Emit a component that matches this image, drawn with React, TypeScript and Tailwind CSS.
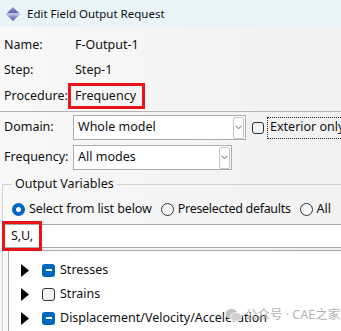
import React from "react";

const Chevron = () => (
  <svg width="7" height="5" viewBox="0 0 7 5" className="block">
    <path d="M0.5 0.8 L3.5 3.8 L6.5 0.8" fill="none" stroke="#555" strokeWidth="0.9" />
  </svg>
);

const Combo = ({ text, width }: { text: string; width: string }) => (
  <div className={`${width} flex-none h-[25px] flex items-center bg-white border border-[#adadad] pl-[4px] pr-[1px]`}>
    <span className="flex-1">{text}</span>
    <div className="w-[11px] h-[22px] border border-[#c4c4c4] rounded-[2px] flex items-center justify-center">
      <Chevron />
    </div>
  </div>
);

const Triangle = () => (
  <svg width="8" height="13" viewBox="0 0 8 13" className="block flex-none">
    <path d="M0 0 L8 6.5 L0 13 Z" fill="#000" />
  </svg>
);

const Check = ({ partial }: { partial?: boolean }) =>
  partial ? (
    <div className="flex-none w-[13px] h-[13px] rounded-[3px] bg-[#0067c0] flex items-center justify-center">
      <div className="w-[6px] h-[1.5px] bg-white" />
    </div>
  ) : (
    <div className="flex-none w-[13px] h-[13px] rounded-[3px] bg-[#f3f3f3] border border-[#333]" />
  );

const Radio = ({ on }: { on?: boolean }) =>
  on ? (
    <div className="flex-none w-[13px] h-[13px] rounded-full bg-[#0067c0] flex items-center justify-center">
      <div className="w-[5px] h-[5px] rounded-full bg-white" />
    </div>
  ) : (
    <div className="flex-none w-[13px] h-[13px] rounded-full border border-[#333] bg-[#f6f6f6]" />
  );

const items = [
  { label: "Stresses", partial: true },
  { label: "Strains", partial: false },
  { label: "Displacement/Velocity/Acceleration", partial: true },
];

export default function App() {
  return (
    <div className="w-[341px] h-[331px] overflow-hidden relative bg-gradient-to-r from-[#f8f8f8] to-[#f1f1f1] text-[12.5px] leading-none text-[#111] font-['Noto_Sans','Noto_Sans_CJK_SC',sans-serif]">
      <div className="h-[27px] bg-[#e8f4f8] flex items-center pl-[6px] gap-[7px] text-[11.5px]">
        <svg width="14" height="16" viewBox="0 0 14 16" className="block">
          <defs>
            <linearGradient id="g" x1="0" y1="0" x2="0" y2="1">
              <stop offset="0" stopColor="#9a9ed8" />
              <stop offset="1" stopColor="#5a5fa8" />
            </linearGradient>
          </defs>
          <path d="M7 1 L13 7 L1 7 Z" fill="url(#g)" />
          <rect x="0" y="7.6" width="14" height="1" fill="#8a8ec8" />
          <path d="M1 9.2 L13 9.2 L7 15 Z" fill="url(#g)" />
        </svg>
        <span>Edit Field Output Request</span>
      </div>

      <div className="pl-[4px] pt-[6px]">
        <div className="h-[25px] flex items-center">
          <span className="w-[64px] flex-none whitespace-nowrap">Name:</span>
          <span className="pl-[7px]">F-Output-1</span>
        </div>
        <div className="h-[25px] flex items-center">
          <span className="w-[64px] flex-none whitespace-nowrap">Step:</span>
          <span className="pl-[7px]">Step-1</span>
        </div>
        <div className="h-[26px] flex items-center">
          <span className="w-[64px] flex-none whitespace-nowrap">Procedure:</span>
          <span className="h-[26px] flex items-center border-[3px] border-[#e8141b] pl-[4px] pr-[6px]">Frequency</span>
        </div>
      </div>

      <div className="mt-[2px] border-t border-[#b4b4b4]" />

      <div className="pl-[4px] pt-[3px] flex flex-col gap-[5px]">
        <div className="flex items-center">
          <span className="w-[69px] flex-none">Domain:</span>
          <Combo text="Whole model" width="w-[173px]" />
          <div className="flex-none ml-[6px] w-[12px] h-[12px] rounded-[3px] border border-[#333] bg-[#f4f4f4]" />
          <span className="flex-none ml-[3px] h-[22px] flex items-center pl-[2px] pr-[4px] border border-dotted border-[#222] whitespace-nowrap">
            Exterior only
          </span>
        </div>
        <div className="flex items-center">
          <span className="w-[69px] flex-none">Frequency:</span>
          <Combo text="All modes" width="w-[159px]" />
        </div>
      </div>

      <fieldset className="mt-[6px] ml-[2px] border-t border-l border-[#d2d2d2] min-w-0">
        <legend className="ml-[9px] px-[3px] leading-[16px]">Output Variables</legend>
        <div className="h-[22px] mt-[6px] pl-[9px] flex items-center whitespace-nowrap">
          <Radio on />
          <span className="ml-[4px] tracking-[-0.1px]">Select from list below</span>
          <div className="ml-[9px] flex-none">
            <Radio />
          </div>
          <span className="ml-[4px] tracking-[-0.3px]">Preselected defaults</span>
          <div className="ml-[9px] flex-none">
            <Radio />
          </div>
          <span className="ml-[4px]">All</span>
        </div>
        <div className="mt-[4px] h-[24px] flex items-center bg-white border-y border-[#a8a8a8]">
          <span className="flex-none h-[30px] w-[40px] -ml-[1px] flex items-center border-[3px] border-[#e8141b] pl-[6px]">S,U,</span>
        </div>
        <div className="mt-[2px] ml-[5px] h-[100px] bg-white border-t border-l border-[#a8a8a8] pt-[7px]">
          {items.map((it) => (
            <div key={it.label} className="h-[24px] flex items-center pl-[12px] whitespace-nowrap">
              <Triangle />
              <div className="ml-[13px] flex-none">
                <Check partial={it.partial} />
              </div>
              <span className="ml-[5px]">{it.label}</span>
            </div>
          ))}
        </div>
      </fieldset>

      <div className="absolute left-[225px] top-[308px] flex items-center gap-[3px] text-[#b3b3b3] text-[12.5px] whitespace-nowrap">
        <svg width="17" height="15" viewBox="0 0 17 15" className="block flex-none">
          <ellipse cx="6.5" cy="6" rx="6" ry="5" fill="#c4c4c4" />
          <ellipse cx="11" cy="9" rx="5.5" ry="4.5" fill="#d2d2d2" stroke="#f4f4f4" strokeWidth="1" />
        </svg>
        <span>公众号 · CAE之家</span>
      </div>
    </div>
  );
}
